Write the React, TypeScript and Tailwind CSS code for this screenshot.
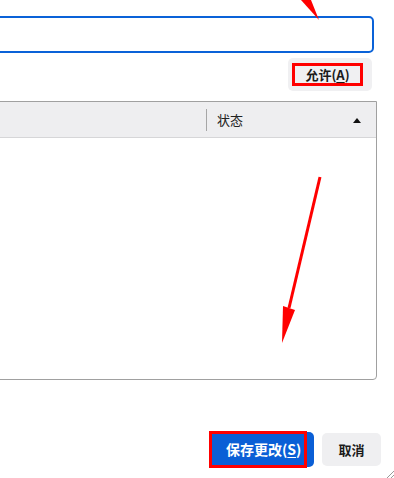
import React from "react";

const FONT = { fontFamily: '"Noto Sans CJK SC", "Noto Sans", sans-serif' };

function Arrows() {
  return (
    <svg className="pointer-events-none absolute inset-0" width="394" height="478" viewBox="0 0 394 478">
      <polygon points="301,0 311,0 319,20" fill="#ff0000" />
      <line x1="320" y1="177" x2="289" y2="308" stroke="#ff0000" strokeWidth="3" />
      <polygon points="283,306 295,310 282,343" fill="#ff0000" />
    </svg>
  );
}

export default function App() {
  return (
    <div className="relative h-[478px] w-[394px] overflow-hidden bg-white text-[#1a1a1a]" style={FONT}>
      <div className="flex flex-col">
        {/* path input */}
        <div className="mt-[16px] flex pr-[20px]">
          <div className="-ml-[10px] h-[37px] flex-1 rounded-[5px] border-2 border-[#0a62d8] bg-white" />
        </div>

        {/* allow button */}
        <div className="mt-[5px] flex justify-end pr-[22px]">
          <button className="flex h-[33px] w-[84px] items-center rounded-[5px] bg-[#f0f0f2] pl-[4px]">
            <span className="flex h-[23px] w-[71px] items-center justify-center border-[3px] border-[#ff0000] text-[13px] font-bold leading-none">
              允许(<span className="underline underline-offset-2">A</span>)
            </span>
          </button>
        </div>

        {/* list */}
        <div className="mt-[10px] flex pr-[17px]">
          <div className="-ml-[10px] flex h-[279px] flex-1 flex-col rounded-br-[4px] border border-[#a0a0a0] bg-white">
            <div className="flex h-[36px] items-center border-b border-[#d6d6d8] bg-[#eeeef0]">
              <div className="w-[215px] shrink-0" />
              <div className="h-[22px] w-px bg-[#a6a6a6]" />
              <span className="ml-[10px] text-[13px] text-[#222]">状态</span>
              <div className="flex-1" />
              <svg width="8" height="5" viewBox="0 0 8 5" className="mr-[15px] mt-[1px]">
                <polygon points="0,5 8,5 4,0" fill="#111" />
              </svg>
            </div>
            <div className="flex-1" />
          </div>
        </div>

        {/* footer */}
        <div className="mt-[52px] flex items-center justify-end gap-[8px] pr-[13px]">
          <div className="relative">
            <button className="flex h-[35px] w-[104px] items-center justify-start rounded-[5px] bg-[#0a5fd6] pl-[16px] text-[14px] font-bold text-white">
              保存更改(<span className="underline underline-offset-2">S</span>)
            </button>
            <div className="absolute -left-[1px] -top-[1px] h-[37px] w-[98px] border-[3px] border-[#ff0000]" />
          </div>
          <button className="flex h-[33px] w-[59px] items-center justify-center rounded-[5px] bg-[#efeff1] text-[13px] font-bold">
            取消
          </button>
        </div>
      </div>

      {/* resize grip */}
      <svg className="absolute bottom-0 right-0" width="10" height="10" viewBox="0 0 10 10">
        <line x1="3" y1="10" x2="10" y2="3" stroke="#999" strokeWidth="1" />
        <line x1="7" y1="10" x2="10" y2="7" stroke="#999" strokeWidth="1" />
      </svg>

      <Arrows />
    </div>
  );
}
